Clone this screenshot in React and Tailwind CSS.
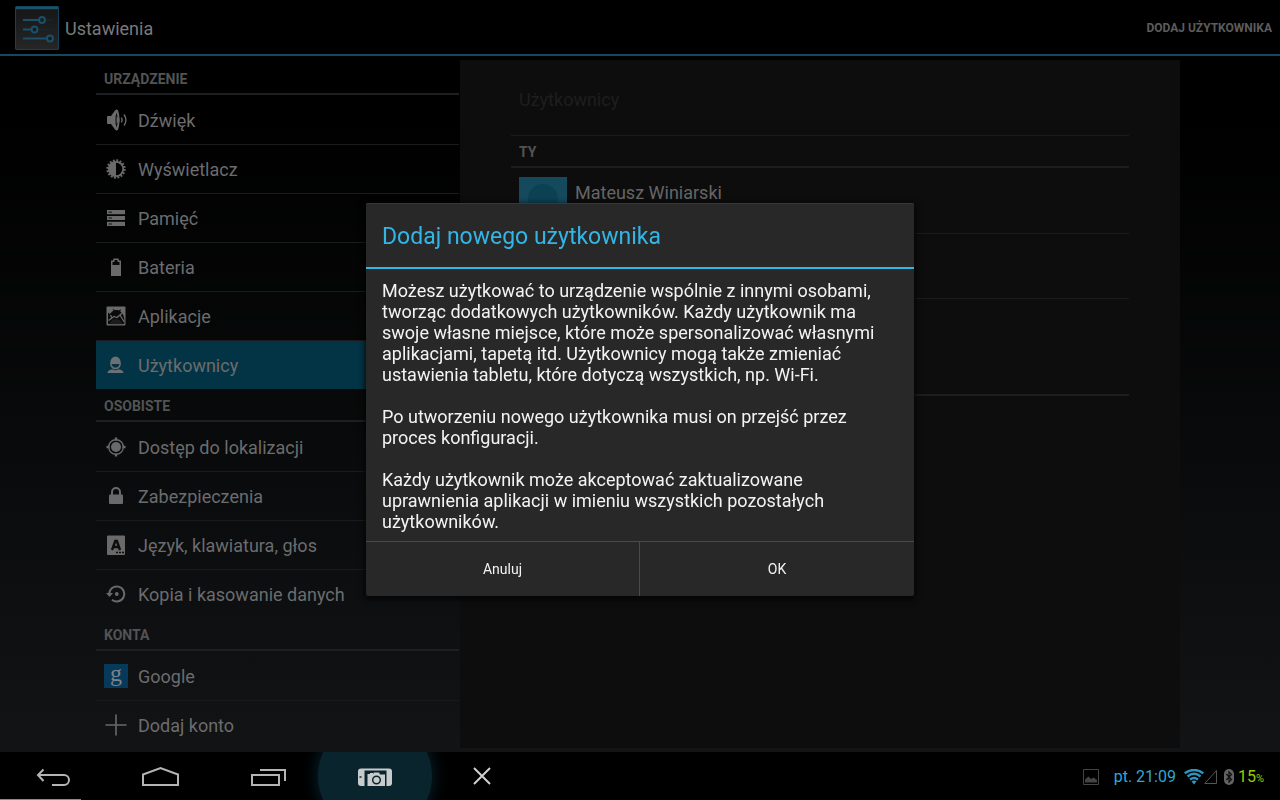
import React, { useState } from 'react';

const SoundIcon = () => (
    <svg width="24" height="24" viewBox="0 0 24 24" fill="#6a6a6a">
        <path d="M3 9q0-1 1-1h3l4-5.500C12 1.300 13 1.200 14 2.200c2 5.500 2 14 0 19.500-1 1-2 .9-3-.3L7 16H4q-1 0-1-1z" />
        <path d="M12.600 4.500c-1.600 4.500-1.600 10.500 0 15 1.500-4.500 1.500-10.500 0-15z" fill="#111" />
        <path d="M12.600 9v6a3 3 0 0 0 0-6z" />
        <path d="M17.300 9.700c1 1.500 1 3.200 0 4.700M20 6.500c2.300 3.400 2.300 7.700 0 11" fill="none" stroke="#6a6a6a" strokeWidth="1.400" />
    </svg>
);

const DisplayIcon = () => (
    <svg width="24" height="24" viewBox="0 0 24 24">
        <circle cx="12" cy="12" r="8.600" fill="none" stroke="#6a6a6a" strokeWidth="2.200" strokeDasharray="1.900 1.480" />
        <circle cx="12" cy="12" r="7.200" fill="none" stroke="#6a6a6a" strokeWidth="1.800" />
        <path d="M12 4.500a7.500 7.500 0 0 0 0 15z" fill="#6a6a6a" />
    </svg>
);

const StorageIcon = () => (
    <svg width="24" height="24" viewBox="0 0 24 24">
        <path d="M3 4h18v4.300H3zM3 10h18v4H3zM3 15.700h18V20H3z" fill="#6a6a6a" />
        <path d="M4.500 6.200h3.500M4.500 12h3.500M4.500 18h3.500" stroke="#111" />
    </svg>
);

const BatteryIcon = () => (
    <svg width="24" height="24" viewBox="0 0 24 24">
        <path d="M7 5.500h2L9.500 3.500h5L15 5.500h2V21H7z" fill="#6a6a6a" />
        <path d="M8.500 7h1.800l.4-2h2.600l.4 2h1.800v3h-7z" fill="#080808" />
    </svg>
);

const AppsIcon = () => (
    <svg width="24" height="24" viewBox="0 0 24 24">
        <rect x="2.500" y="2.500" width="19" height="19" rx="1" fill="#6a6a6a" />
        <path d="M4 17V8.500l2 1.500c1-1.500 2.200-2.500 3.500-3.200L8.500 4.500l2.300 1.700c1.300-.3 2.600-.2 4 .2L17 5l-.8 2.300C18.500 9 20 11.500 20.300 15v5H4z" fill="#0b0b0b" />
        <path d="M4.500 16.500 10 12.500l3 1L20 7.500M16 11l4.300 7M6.500 11l1.500 3" stroke="#6a6a6a" strokeWidth="1.300" fill="none" />
        <path d="M5.500 20.300c1.500-4.500 5-6.300 8.500-4.800 2.300 1 4 2.600 4.500 4.800z" fill="#1c1c1c" />
    </svg>
);

const UserIcon = () => (
    <svg width="24" height="24" viewBox="0 0 24 24" fill="#6a7073">
        <path d="M6.300 9.500a5.200 6 0 0 1 10.400 0l.3 1.500c-1 4-3 5.300-5.500 5.300S7 15 6 11z" />
        <path d="M7.500 11h8c-.6 2.600-2 3.600-4 3.600s-3.400-1-4-3.600z" fill="#073443" />
        <path d="M3.500 20c.2-2.200 2-3.200 5-3.700 2 1.200 4 1.200 6 0 3 .5 4.800 1.500 5 3.700z" />
    </svg>
);

const LocationIcon = () => (
    <svg width="24" height="24" viewBox="0 0 24 24">
        <circle cx="12" cy="12" r="5" fill="#6a6a6a" />
        <circle cx="12" cy="12" r="7.300" fill="none" stroke="#6a6a6a" strokeWidth="1.400" />
        <path d="M12 2.500v3M12 18.500v3M2.500 12h3M18.500 12h3" stroke="#6a6a6a" strokeWidth="2.400" />
    </svg>
);

const LockIcon = () => (
    <svg width="24" height="24" viewBox="0 0 24 24">
        <rect x="5" y="10.500" width="14" height="9.500" rx="1" fill="#6a6a6a" />
        <path d="M8 11V8a4 4 0 0 1 8 0v3" fill="none" stroke="#6a6a6a" strokeWidth="2" />
    </svg>
);

const LanguageIcon = () => (
    <svg width="24" height="24" viewBox="0 0 24 24">
        <rect x="3" y="2.500" width="18" height="19.500" rx="1" fill="#6a6a6a" />
        <path d="M8 17 11.300 8h1.600L16 17M9.500 14h5" fill="none" stroke="#0d0d0d" strokeWidth="2.400" />
        <path d="M12 19.500h2M15 19.500h2M18 19.500h2" stroke="#0d0d0d" strokeWidth="1.600" />
    </svg>
);

const BackupIcon = () => (
    <svg width="24" height="24" viewBox="0 0 24 24" fill="#6a6a6a">
        <path d="M5.300 12a7.500 7.500 0 1 1 2.700 5.700" fill="none" stroke="#6a6a6a" strokeWidth="2" />
        <path d="M2 11h7l-3.500 4z" />
        <circle cx="12.800" cy="12" r="1.900" />
    </svg>
);

const GoogleIcon = () => (
    <span className="flex h-6 w-6 items-center justify-center bg-[#06395a] pb-1.5 font-['Liberation_Serif',serif] text-2xl leading-6 text-[#7d8386]">
        g
    </span>
);

const AddIcon = () => (
    <svg width="24" height="24" viewBox="0 0 24 24">
        <path d="M12 1.500v21M1.500 12h21" stroke="#6a6a6a" strokeWidth="1.600" />
    </svg>
);

const SettingsLogo = () => (
    <svg width="44" height="44" viewBox="0 0 44 44">
        <defs>
            <linearGradient id="logoFill" x1="0" y1="0" x2="0" y2="1">
                <stop offset="0" stopColor="#161616" />
                <stop offset="1" stopColor="#262626" />
            </linearGradient>
        </defs>
        <rect x="0.500" y="0.500" width="43" height="43" rx="1.500" fill="url(#logoFill)" stroke="#17405a" strokeWidth="1.200" />
        <path d="M1 2h42" stroke="#1b536b" strokeWidth="2.600" />
        <path d="M8 14h29.500M8 23.500h29.500M8 32.500h29.500" stroke="#0b2a3b" strokeWidth="1.600" />
        <path d="M8 14h16M8 23.500h8.500M8 32.500h24" stroke="#1a506b" strokeWidth="1.800" />
        <g fill="#1c1c1c" stroke="#1a506b" strokeWidth="2">
            <circle cx="27" cy="14" r="2.900" />
            <circle cx="19.500" cy="23.500" r="2.900" />
            <circle cx="35" cy="32.500" r="2.900" />
        </g>
    </svg>
);

const sections = [
    {
        title: 'URZĄDZENIE',
        items: [
            { label: 'Dźwięk', icon: SoundIcon },
            { label: 'Wyświetlacz', icon: DisplayIcon },
            { label: 'Pamięć', icon: StorageIcon },
            { label: 'Bateria', icon: BatteryIcon },
            { label: 'Aplikacje', icon: AppsIcon },
            { label: 'Użytkownicy', icon: UserIcon },
        ],
    },
    {
        title: 'OSOBISTE',
        items: [
            { label: 'Dostęp do lokalizacji', icon: LocationIcon },
            { label: 'Zabezpieczenia', icon: LockIcon },
            { label: 'Język, klawiatura, głos', icon: LanguageIcon },
            { label: 'Kopia i kasowanie danych', icon: BackupIcon },
        ],
    },
    {
        title: 'KONTA',
        items: [
            { label: 'Google', icon: GoogleIcon },
            { label: 'Dodaj konto', icon: AddIcon },
        ],
    },
];

const Header = ({ onAdd }) => (
    <header className="flex h-14 items-center justify-between border-b-2 border-[#14495c] bg-black pt-0.5 pl-[15px] pr-2">
        <div className="flex items-center gap-1.5">
            <SettingsLogo />
            <h1 className="pt-0.5 text-lg text-[#7a7a7a]">Ustawienia</h1>
        </div>
        <button onClick={onAdd} className="text-xs font-bold text-[#5c5c5c]">DODAJ UŻYTKOWNIKA</button>
    </header>
);

const Sidebar = ({ selected, onSelect }) => (
    <nav className="w-[363px] shrink-0 pt-1.5">
        {sections.map((section) => (
            <section key={section.title}>
                <h2 className="mb-px h-[33px] border-b-2 border-[#1d1f20] px-2 pt-px text-sm leading-8 font-bold text-[#525354]">
                    {section.title}
                </h2>
                <ul className="divide-y divide-[#191b1c]">
                    {section.items.map(({ label, icon: Icon }) => (
                        <li key={label}>
                            <button
                                onClick={() => onSelect(label)}
                                className={`flex h-12 w-full items-center gap-2.5 px-2 text-left text-lg text-[#6b6c6d] ${label === selected ? 'bg-[#033445]' : ''}`}
                            >
                                <Icon />
                                <span className="pt-0.5">{label}</span>
                            </button>
                        </li>
                    ))}
                </ul>
            </section>
        ))}
    </nav>
);

const UsersPanel = () => (
    <main className="mt-1 mr-[100px] mb-1 ml-px flex-1 bg-[#0d0d0d] px-[51px]">
        <h2 className="h-[76px] border-b border-[#1b1b1b] px-2 pt-0.5 text-lg leading-[76px] text-[#1e1e1e]">Użytkownicy</h2>
        <h3 className="h-8 border-b-2 border-[#1d1d1d] px-2 text-sm leading-8 font-bold text-[#525252]">TY</h3>
        <div className="flex h-[66px] items-start gap-2 border-b border-[#1b1b1b] px-2 pt-[9px]">
            <svg width="48" height="48" viewBox="0 0 48 48">
                <rect width="48" height="48" fill="#15495c" />
                <circle cx="24" cy="22" r="15" fill="#0b4153" />
                <path d="M4 48c2-8 10-10 20-10s18 2 20 10z" fill="#0b4153" />
            </svg>
            <span className="pt-0.5 text-lg text-[#666]">Mateusz Winiarski</span>
        </div>
        <div className="h-[65px] border-b border-[#1b1b1b]" />
        <div className="h-[97px] border-b-2 border-[#1d1d1d]" />
    </main>
);

const AddUserDialog = ({ onClose }) => (
    <div className="fixed inset-0 z-10 flex items-center justify-center pb-0.5">
        <div
            role="dialog"
            aria-labelledby="dialog-title"
            className="w-[548px] rounded-xs bg-[#282828] shadow-[0_2px_6px_1px_rgba(0,0,0,0.8)]"
        >
            <h2
                id="dialog-title"
                className="h-[66px] rounded-t-xs border-t border-b-2 border-t-[#383838] border-b-[#33b5e5] px-4 text-[23px] leading-[65px] text-[#33b5e5]"
            >
                Dodaj nowego użytkownika
            </h2>
            <div className="space-y-[21px] px-4 pt-[11px] pb-[9px] text-lg leading-[21px] text-[#f3f3f3]">
                <p>
                    Możesz użytkować to urządzenie wspólnie z innymi osobami,<br />
                    tworząc dodatkowych użytkowników. Każdy użytkownik ma<br />
                    swoje własne miejsce, które może spersonalizować własnymi<br />
                    aplikacjami, tapetą itd. Użytkownicy mogą także zmieniać<br />
                    ustawienia tabletu, które dotyczą wszystkich, np. Wi-Fi.
                </p>
                <p>
                    Po utworzeniu nowego użytkownika musi on przejść przez<br />
                    proces konfiguracji.
                </p>
                <p>
                    Każdy użytkownik może akceptować zaktualizowane<br />
                    uprawnienia aplikacji w imieniu wszystkich pozostałych<br />
                    użytkowników.
                </p>
            </div>
            <div className="grid grid-cols-2 divide-x divide-[#4a4a4a] border-t border-[#4a4a4a] text-sm text-[#f3f3f3]">
                <button onClick={onClose} className="h-[54px]">Anuluj</button>
                <button onClick={onClose} className="h-[54px]">OK</button>
            </div>
        </div>
    </div>
);

const NavBar = () => (
    <footer className="relative z-20 flex h-12 items-center justify-between overflow-hidden bg-black">
        <div className="flex h-full items-center">
            <button aria-label="Wstecz" className="flex h-full w-[107px] items-center justify-center">
                <svg width="36" height="24" viewBox="0 0 36 24" fill="none" stroke="#b4b4b4" strokeWidth="2">
                    <path d="M7.500 5.500 2 11l5.500 6M2 11h26a5 5 0 0 1 0 10H16" />
                </svg>
            </button>
            <button aria-label="Ekran główny" className="flex h-full w-[107px] items-center justify-center">
                <svg width="38" height="24" viewBox="0 0 38 24" fill="none" stroke="#b4b4b4" strokeWidth="2">
                    <path d="M1 21V10.500L18.500 4 36 10.500V21z" />
                </svg>
            </button>
            <button aria-label="Ostatnie" className="flex h-full w-[107px] items-center justify-center">
                <svg width="36" height="24" viewBox="0 0 36 24" fill="none" stroke="#b4b4b4" strokeWidth="2">
                    <path d="M2 11h27v10H2zM10 6h25v11" />
                </svg>
            </button>
            <button aria-label="Zrzut ekranu" className="flex h-full w-[107px] items-center justify-center">
                <span className="flex h-[114px] w-[114px] shrink-0 items-center justify-center rounded-full bg-[#0a242d] shadow-[0_0_16px_1px_rgba(10,50,66,0.7)]">
                    <svg width="36" height="24" viewBox="0 0 36 24">
                        <rect x="1" y="4.500" width="34" height="17.500" rx="3" fill="#c8cbcc" />
                        <path d="M7.500 6.500h22V22h-22z" fill="#0a242d" />
                        <path d="M10.500 22V10h2.500V9h3v1l1-1.500h5l1 2h5V22z" fill="#c8cbcc" />
                        <circle cx="19.500" cy="16" r="3.800" fill="none" stroke="#0a242d" strokeWidth="1.500" />
                        <path d="M2.500 13h2" stroke="#0a242d" strokeWidth="1.500" />
                    </svg>
                </span>
            </button>
            <button aria-label="Zamknij" className="flex h-full w-[107px] items-center justify-center">
                <svg width="20" height="20" viewBox="0 0 20 20" stroke="#d0d0d0" strokeWidth="2">
                    <path d="M2 2l16 16M18 2 2 18" />
                </svg>
            </button>
        </div>
        <div className="flex items-center pt-0.5 pr-4 text-base">
            <svg width="16" height="16" viewBox="0 0 16 16" className="mr-[15px]">
                <path d="M.5.500h15v15H.5z" fill="none" stroke="#444" />
                <path d="M2 13.500v-3L5.500 7.500 8 10l2.500-1.500 3.500 2.500v2.500z" fill="#444" />
            </svg>
            <span className="text-[#33a5d5]">pt. 21:09</span>
            <svg width="20" height="16" viewBox="0 0 20 16" className="ml-2" fill="none" stroke="#2c95bf" strokeWidth="2.400">
                <path d="M.7 4.200c5.500-4.300 13.100-4.300 18.600 0M3.500 7.500c4-3.300 9-3.300 13 0M6 10.500c2.500-2 5.500-2 8 0" />
                <path d="M7.500 12.500c1.600-1.200 3.400-1.200 5 0L10 15.500z" fill="#2c95bf" stroke="none" />
            </svg>
            <svg width="14" height="16" viewBox="0 0 14 16" fill="none" stroke="#555">
                <path d="M12.500 1.500v13H.8z" />
            </svg>
            <svg width="10" height="16" viewBox="0 0 10 16" className="ml-1.5 mr-1">
                <rect width="10" height="16" rx="5" fill="#636363" />
                <path d="M2.300 5 7.500 10.500 5 13V3l2.500 2.500L2.300 11" fill="none" stroke="#111" strokeWidth="1.200" />
            </svg>
            <span className="text-[#99cc00]">15<span className="text-[11px]">%</span></span>
        </div>
        <span className="absolute bottom-0 left-0 h-px w-[81px] bg-[#22c55e]" />
    </footer>
);

const App = () => {
    const [selected, setSelected] = useState('Użytkownicy');
    const [dialogOpen, setDialogOpen] = useState(true);

    return (
        <div className="flex min-h-screen flex-col bg-linear-to-b/srgb from-black from-15% to-[#131517] font-['Roboto','Noto_Sans',sans-serif]">
            <Header onAdd={() => setDialogOpen(true)} />
            <div className="flex flex-1 pl-24">
                <Sidebar selected={selected} onSelect={setSelected} />
                <UsersPanel />
            </div>
            <NavBar />
            {dialogOpen && <AddUserDialog onClose={() => setDialogOpen(false)} />}
        </div>
    );
};

export default App;
